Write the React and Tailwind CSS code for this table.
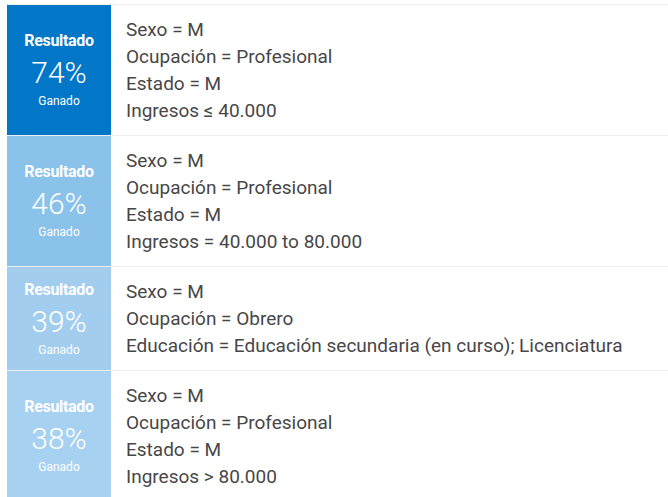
const rows = [
  {
    pct: "74%",
    bg: "bg-[#0277c7]",
    lines: ["Sexo = M", "Ocupación = Profesional", "Estado = M", "Ingresos ≤ 40.000"],
  },
  {
    pct: "46%",
    bg: "bg-[#8ac2ea]",
    lines: ["Sexo = M", "Ocupación = Profesional", "Estado = M", "Ingresos = 40.000 to 80.000"],
  },
  {
    pct: "39%",
    bg: "bg-[#a2cdef]",
    lines: [
      "Sexo = M",
      "Ocupación = Obrero",
      "Educación = Educación secundaria (en curso); Licenciatura",
    ],
  },
  {
    pct: "38%",
    bg: "bg-[#a7d1f1]",
    lines: ["Sexo = M", "Ocupación = Profesional", "Estado = M", "Ingresos > 80.000"],
  },
];

export default function App() {
  return (
    <div
      className="w-[668px] h-[497px] overflow-hidden bg-white pl-[7px] pt-[4px]"
      style={{ fontFamily: "Roboto, 'Liberation Sans', sans-serif" }}
    >
      <div className="border-t border-[#efefef]">
        {rows.map((r) => (
          <div key={r.pct} className="flex border-b border-[#eeeeee]">
            <div
              className={`w-[104px] shrink-0 flex flex-col items-center justify-center text-white ${r.bg}`}
            >
              <div className="text-[16px] font-bold leading-[20px] tracking-[-0.3px]">Resultado</div>
              <div className="text-[30px] font-light leading-[34px] mt-[5px]">{r.pct}</div>
              <div className="text-[12px] leading-[16px] mt-[3px]">Ganado</div>
            </div>
            <div className="pl-[15px] py-[11px] text-[19px] leading-[27px] text-[#474747]">
              {r.lines.map((l) => (
                <div key={l}>{l}</div>
              ))}
            </div>
          </div>
        ))}
      </div>
    </div>
  );
}
